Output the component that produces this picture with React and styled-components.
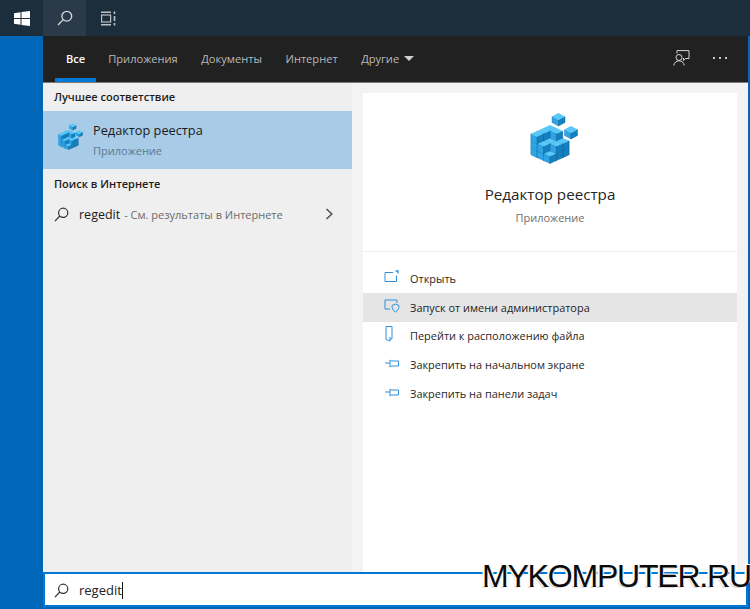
import React from 'react';
import styled, { createGlobalStyle } from 'styled-components';

const Global = createGlobalStyle`
	html, body {
		margin: 0;
		padding: 0;
		background: #0066b8;
	}
	* {
		box-sizing: border-box;
	}
`;

const Screen = styled.div`
	position: relative;
	width: 750px;
	height: 609px;
	overflow: hidden;
	display: flex;
	flex-direction: column;
	font-family: 'Open Sans', 'Noto Sans', sans-serif;
	background: #0066b8;
`;

const Taskbar = styled.div`
	height: 36px;
	flex: none;
	display: flex;
	background: #1c2e3c;
`;

const TaskButton = styled.div`
	width: 43px;
	height: 36px;
	display: flex;
	align-items: center;
	justify-content: center;
	background: ${({ active }) => (active ? '#2a3a49' : 'transparent')};
`;

const Body = styled.div`
	flex: 1;
	min-height: 0;
	display: flex;
	padding-left: 43px;
	padding-right: 2px;
	padding-bottom: 2px;
`;

const Panel = styled.div`
	flex: 1;
	min-width: 0;
	display: flex;
	flex-direction: column;
	background: #f3f3f3;
`;

const Tabs = styled.div`
	height: 47px;
	flex: none;
	display: flex;
	align-items: stretch;
	padding-left: 12px;
	background: #212121;
	border-bottom: 1px solid #7a7a7a;
`;

const Tab = styled.div`
	position: relative;
	display: flex;
	align-items: center;
	gap: 5px;
	height: 46px;
	padding: 0 ${({ active }) => (active ? '11px' : '12px')} 2px;
	margin-right: ${({ active }) => (active ? '0' : '-0.5px')};
	font-size: 11.1px;
	font-weight: ${({ active }) => (active ? 600 : 400)};
	color: ${({ active }) => (active ? '#ffffff' : '#b9b9b9')};

	${({ active }) =>
		active &&
		`
    &::after {
      content: '';
      position: absolute;
      left: 0;
      right: 0;
      bottom: 0;
      height: 4px;
      background: #0078d7;
    }
  `}
`;

const Caret = styled.span`
	width: 0;
	height: 0;
	border-left: 5px solid transparent;
	border-right: 5px solid transparent;
	border-top: 5px solid #d0d0d0;
`;

const TabTools = styled.div`
	margin-left: auto;
	display: flex;
	align-items: center;
	gap: 23px;
	padding: 0 21px 2px 0;
`;

const Dots = styled.div`
	display: flex;
	gap: 4px;

	span {
		width: 2px;
		height: 2px;
		background: #c8c8c8;
	}
`;

const Content = styled.div`
	flex: 1;
	min-height: 0;
	display: flex;
`;

const Results = styled.div`
	width: 309px;
	flex: none;
	background: #efefef;
`;

const SectionTitle = styled.div`
	height: ${({ tall }) => (tall ? '30px' : '28px')};
	padding: 0 0 2px 11px;
	display: flex;
	align-items: center;
	font-size: 11px;
	font-weight: 600;
	color: #1c1c1c;
`;

const BestMatch = styled.div`
	height: 58px;
	display: flex;
	background: #a8cbe7;
`;

const BestIcon = styled.div`
	width: 50px;
	flex: none;
	display: flex;
	justify-content: center;
	padding: 12px 0 0 4px;
`;

const BestText = styled.div`
	padding-top: 10px;
`;

const BestTitle = styled.div`
	font-size: 12.75px;
	line-height: 18px;
	color: #1a1a1a;
`;

const BestSub = styled.div`
	margin-top: 4px;
	font-size: 11px;
	line-height: 15px;
	color: #5b7a90;
`;

const WebRow = styled.div`
	height: 30px;
	display: flex;
	align-items: center;
	padding: 0 18px 0 11px;
	font-size: 12.5px;
	color: #1a1a1a;
`;

const WebQuery = styled.span`
	margin-left: 10px;
`;

const WebHint = styled.span`
	margin-left: 4px;
	font-size: 11px;
	color: #6b6b6b;
`;

const WebArrow = styled.span`
	margin-left: auto;
	display: flex;
`;

const Details = styled.div`
	flex: 1;
	min-width: 0;
	padding: 10px 11px 0;
	display: flex;
`;

const Card = styled.div`
	flex: 1;
	min-width: 0;
	background: #ffffff;
`;

const Hero = styled.div`
	height: 159px;
	display: flex;
	flex-direction: column;
	align-items: center;
	padding-top: 19px;
	border-bottom: 1px solid #f0f0f0;
`;

const HeroIcon = styled.div`
	display: flex;
	margin-left: 8px;
`;

const HeroTitle = styled.div`
	margin-top: 20px;
	font-size: 15.2px;
	line-height: 20px;
	color: #262626;
`;

const HeroSub = styled.div`
	margin-top: 6px;
	font-size: 11px;
	line-height: 16px;
	color: #6e6e6e;
`;

const Actions = styled.div`
	padding-top: 12px;
`;

const Action = styled.div`
	height: 28.8px;
	display: flex;
	align-items: center;
	gap: 10px;
	padding-left: 21px;
	font-size: 10.95px;
	color: #1f1f1f;
	background: ${({ active }) => (active ? '#e5e5e5' : 'transparent')};
`;

const ActionIcon = styled.svg`
	width: 16px;
	height: 16px;
	flex: none;
	fill: none;
	overflow: visible;
	stroke: #2f8fdb;
	stroke-width: 1;
`;

const SearchBox = styled.div`
	height: 35px;
	flex: none;
	display: flex;
	align-items: center;
	padding: 1px 0 0 9px;
	background: #ffffff;
	border: 2px solid #0078d7;
	font-size: 13px;
	color: #222222;
`;

const SearchText = styled.span`
	margin-left: 10px;
	border-right: 1px solid #111111;
	line-height: 17px;
`;

const Watermark = styled.div`
	position: absolute;
	left: 482px;
	top: 558px;
	font-family: 'Liberation Sans', Arial, sans-serif;
	font-size: 32px;
	line-height: 36px;
	letter-spacing: -1.2px;
	white-space: nowrap;
	color: #0a0a0a;
	text-shadow: -2px -1px 0 #ffffff, -2px 1px 0 #dcdcdc, 1px -1px 0 #ffffff, 0.5px 0 0 #0a0a0a;
`;

function WindowsIcon() {
	return (
		<svg width="16" height="15" viewBox="0 0 16 15" fill="#ffffff">
			<path d="M0 2.2 6.5 1.2V7H0zM7.5 1.1 16 0V7H7.5zM0 8H6.5V13.8L0 12.8zM7.5 8H16V15L7.5 13.9z" />
		</svg>
	);
}

function SearchIcon({ size = 16, color = '#333333', width = 1.3 }) {
	return (
		<svg width={size} height={size} viewBox="0 0 16 16" fill="none" stroke={color} strokeWidth={width}>
			<circle cx="9.8" cy="6.2" r="4.9" />
			<path d="M6.2 9.6 1 15" />
		</svg>
	);
}

function TaskViewIcon() {
	return (
		<svg width="16" height="15" viewBox="0 0 16 15" fill="none" stroke="#b9c0c6" strokeWidth="1.2">
			<path d="M1 1.2H11M1 13.8H11" strokeWidth="1.6" />
			<rect x="1.6" y="4" width="9" height="7" />
			<path d="M14.5 0.5V3M14.5 5V10M14.5 12V14.5" strokeWidth="1.6" />
		</svg>
	);
}

function FeedbackIcon() {
	return (
		<svg width="17" height="16" viewBox="0 0 17 16" fill="none" stroke="#d6d6d6" strokeWidth="1">
			<path d="M4 3.5V0.6H16V8.5H12.5L10.5 10.5V8" />
			<circle cx="6" cy="7.5" r="3" />
			<path d="M0.8 15.5C1.2 12.5 3.2 10.8 6 10.8S10.8 12.500 11.2 15.5" />
		</svg>
	);
}

// one small block of the registry icon, drawn from its top centre
function Block({ x, y, w = 6.4, h = 2.9, d = 7 }) {
	return (
		<g>
			<polygon points={`${x - w},${y} ${x},${y + h} ${x},${y + h + d} ${x - w},${y + d}`} fill="#2fa4e4" stroke="#1679b5" strokeWidth="0.4" />
			<polygon points={`${x + w},${y} ${x},${y + h} ${x},${y + h + d} ${x + w},${y + d}`} fill="#1480c2" stroke="#0b5584" strokeWidth="0.4" />
			<polygon points={`${x},${y - h} ${x + w},${y} ${x},${y + h} ${x - w},${y}`} fill="#58c8f8" />
		</g>
	);
}

const stack = [
	[0, 0, 0], [1, 0, 0], [2, 0, 0], [0, 1, 0], [1, 1, 0], [2, 1, 0], [0, 2, 0], [1, 2, 0], [2, 2, 0],
	[0, 0, 1], [1, 0, 1], [2, 0, 1], [0, 1, 1], [1, 1, 1], [2, 1, 1], [0, 2, 1], [1, 2, 1],
	[0, 0, 2], [1, 0, 2], [0, 1, 2], [0, 2, 2],
];

function RegistryIcon({ size = 48 }) {
	return (
		<svg width={size} height={size * (52 / 48)} viewBox="0 0 48 52">
			<g>
				{stack.map(([i, j, k]) => (
					<Block key={`${i}-${j}-${k}`} x={20 + (i - j) * 6.4} y={16 + (i + j) * 2.9 + (2 - k) * 7} />
				))}
			</g>
			<Block x={28.5} y={4.5} w={6.5} h={3.5} d={6} />
			<Block x={41} y={17.5} w={6.5} h={3.5} d={6} />
		</svg>
	);
}

function Chevron() {
	return (
		<svg width="9" height="12" viewBox="0 0 9 12" fill="none" stroke="#555555" strokeWidth="1.6">
			<path d="M1.5 1 6.8 6 1.5 11" />
		</svg>
	);
}

const pin = <path d="M1 6H6M6 3 7.5 4H14.5V9H7.5L6 10Z" />;

const actions = [
	{
		label: 'Открыть',
		icon: (
			<>
				<path d="M12.5 5.500V11.500H1V2.500H9" />
				<path d="M11.500 1H14V3.500" strokeWidth="1.3" />
			</>
		),
	},
	{
		label: 'Запуск от имени администратора',
		active: true,
		icon: (
			<>
				<path d="M6 10H1V1H13V4" />
				<path d="M11.500 5 15 6.500C15 9.500 14 11.500 11.500 13 9 11.500 8 9.500 8 6.500Z" />
			</>
		),
	},
	{
		label: 'Перейти к расположению файла',
		icon: (
			<>
				<path d="M2 -1.500H8V11H6" />
				<path d="M2 -1.500V11.500L6 13V9" />
			</>
		),
	},
	{
		label: 'Закрепить на начальном экране',
		icon: pin,
	},
	{
		label: 'Закрепить на панели задач',
		icon: pin,
	},
];

export default function App() {
	return (
		<Screen>
			<Global />
			<Taskbar>
				<TaskButton>
					<WindowsIcon />
				</TaskButton>
				<TaskButton active>
					<SearchIcon color="#d5dade" size={16} />
				</TaskButton>
				<TaskButton>
					<TaskViewIcon />
				</TaskButton>
			</Taskbar>
			<Body>
				<Panel>
					<Tabs>
						<Tab active>Все</Tab>
						<Tab>Приложения</Tab>
						<Tab>Документы</Tab>
						<Tab>Интернет</Tab>
						<Tab>
							Другие <Caret />
						</Tab>
						<TabTools>
							<FeedbackIcon />
							<Dots>
								<span />
								<span />
								<span />
							</Dots>
						</TabTools>
					</Tabs>
					<Content>
						<Results>
							<SectionTitle>Лучшее соответствие</SectionTitle>
							<BestMatch>
								<BestIcon>
									<RegistryIcon size={25} />
								</BestIcon>
								<BestText>
									<BestTitle>Редактор реестра</BestTitle>
									<BestSub>Приложение</BestSub>
								</BestText>
							</BestMatch>
							<SectionTitle tall>Поиск в Интернете</SectionTitle>
							<WebRow>
								<SearchIcon size={15} />
								<WebQuery>regedit</WebQuery>
								<WebHint>- См. результаты в Интернете</WebHint>
								<WebArrow>
									<Chevron />
								</WebArrow>
							</WebRow>
						</Results>
						<Details>
							<Card>
								<Hero>
									<HeroIcon>
										<RegistryIcon size={48} />
									</HeroIcon>
									<HeroTitle>Редактор реестра</HeroTitle>
									<HeroSub>Приложение</HeroSub>
								</Hero>
								<Actions>
									{actions.map(item => (
										<Action key={item.label} active={item.active}>
											<ActionIcon viewBox="0 0 16 16">{item.icon}</ActionIcon>
											{item.label}
										</Action>
									))}
								</Actions>
							</Card>
						</Details>
					</Content>
					<SearchBox>
						<SearchIcon size={15} />
						<SearchText>regedit</SearchText>
					</SearchBox>
				</Panel>
			</Body>
			<Watermark>MYKOMPUTER.RU</Watermark>
		</Screen>
	);
}
